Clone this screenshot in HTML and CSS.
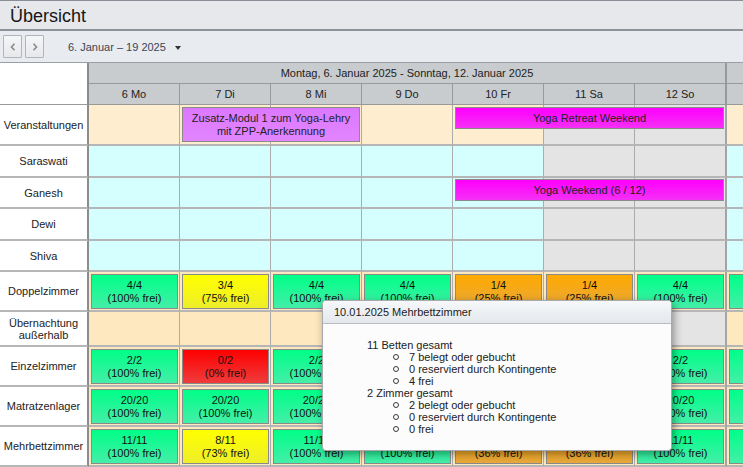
FILE: index.html
```html
<!DOCTYPE html>
<html lang="de">
<head>
<meta charset="utf-8">
<title>Übersicht</title>
<link rel="stylesheet" href="styles.css">
</head>
<body>
<div class="app">
  <header class="titlebar"><h1>Übersicht</h1></header>
  <div class="toolbar">
    <button class="nav" aria-label="zurück"><svg width="6" height="8" viewBox="0 0 6 8"><polyline points="4.5,0.8 1.5,4 4.5,7.2" fill="none" stroke="#8a8a8a" stroke-width="1.6"/></svg></button>
    <button class="nav" aria-label="weiter"><svg width="6" height="8" viewBox="0 0 6 8"><polyline points="1.5,0.8 4.5,4 1.5,7.2" fill="none" stroke="#8a8a8a" stroke-width="1.6"/></svg></button>
    <span class="range">6. Januar – 19 2025</span><span class="caret"></span>
  </div>

  <div class="sched">
    <div class="head">
      <div class="hlabel"></div>
      <div class="week">Montag, 6. Januar 2025 - Sonntag, 12. Januar 2025</div>
      <div class="week nextweek"></div>
      <div class="day">6 Mo</div>
      <div class="day">7 Di</div>
      <div class="day">8 Mi</div>
      <div class="day">9 Do</div>
      <div class="day">10 Fr</div>
      <div class="day">11 Sa</div>
      <div class="day end">12 So</div>
      <div class="day"></div>
    </div>

    <div class="row r-ev">
      <div class="cell lab">Veranstaltungen</div>
      <div class="cell ev"></div>
      <div class="cell ev"></div>
      <div class="cell ev"></div>
      <div class="cell ev"></div>
      <div class="cell ev"></div>
      <div class="cell we"></div>
      <div class="cell we end"></div>
      <div class="cell ev"></div>
      <div class="bar violet span-zusatz">Zusatz-Modul 1 zum Yoga-Lehry<br>mit ZPP-Anerkennung</div>
      <div class="bar magenta span-weekend">Yoga Retreat Weekend</div>
    </div>

    <div class="row r-p1">
      <div class="cell lab">Saraswati</div>
      <div class="cell cy"></div><div class="cell cy"></div><div class="cell cy"></div><div class="cell cy"></div><div class="cell cy"></div>
      <div class="cell we"></div><div class="cell we end"></div><div class="cell cy"></div>
    </div>
    <div class="row r-p2">
      <div class="cell lab">Ganesh</div>
      <div class="cell cy"></div><div class="cell cy"></div><div class="cell cy"></div><div class="cell cy"></div><div class="cell cy"></div>
      <div class="cell we"></div><div class="cell we end"></div><div class="cell cy"></div>
      <div class="bar magenta span-weekend slim">Yoga Weekend (6 / 12)</div>
    </div>
    <div class="row r-p1">
      <div class="cell lab">Dewi</div>
      <div class="cell cy"></div><div class="cell cy"></div><div class="cell cy"></div><div class="cell cy"></div><div class="cell cy"></div>
      <div class="cell we"></div><div class="cell we end"></div><div class="cell cy"></div>
    </div>
    <div class="row r-p2">
      <div class="cell lab">Shiva</div>
      <div class="cell cy"></div><div class="cell cy"></div><div class="cell cy"></div><div class="cell cy"></div><div class="cell cy"></div>
      <div class="cell we"></div><div class="cell we end"></div><div class="cell cy"></div>
    </div>

    <div class="row r-rm">
      <div class="cell lab">Doppelzimmer</div>
      <div class="cell rm"><div class="box green">4/4<br>(100% frei)</div></div>
      <div class="cell rm"><div class="box yellow">3/4<br>(75% frei)</div></div>
      <div class="cell rm"><div class="box green">4/4<br>(100% frei)</div></div>
      <div class="cell rm"><div class="box green">4/4<br>(100% frei)</div></div>
      <div class="cell rm"><div class="box orange">1/4<br>(25% frei)</div></div>
      <div class="cell rm"><div class="box orange">1/4<br>(25% frei)</div></div>
      <div class="cell rm end"><div class="box green">4/4<br>(100% frei)</div></div>
      <div class="cell rm"><div class="box green"></div></div>
    </div>

    <div class="row r-ub">
      <div class="cell lab">Übernachtung<br>außerhalb</div>
      <div class="cell rm"></div><div class="cell rm"></div><div class="cell rm"></div><div class="cell rm"></div><div class="cell rm"></div>
      <div class="cell we"></div><div class="cell we end"></div><div class="cell rm"></div>
    </div>

    <div class="row r-rm">
      <div class="cell lab">Einzelzimmer</div>
      <div class="cell rm"><div class="box green">2/2<br>(100% frei)</div></div>
      <div class="cell rm"><div class="box red">0/2<br>(0% frei)</div></div>
      <div class="cell rm"><div class="box green">2/2<br>(100% frei)</div></div>
      <div class="cell rm"><div class="box green">2/2<br>(100% frei)</div></div>
      <div class="cell rm"><div class="box green">2/2<br>(100% frei)</div></div>
      <div class="cell rm"><div class="box green">2/2<br>(100% frei)</div></div>
      <div class="cell rm end"><div class="box green">2/2<br>(100% frei)</div></div>
      <div class="cell rm"><div class="box green"></div></div>
    </div>

    <div class="row r-rm">
      <div class="cell lab">Matratzenlager</div>
      <div class="cell rm"><div class="box green">20/20<br>(100% frei)</div></div>
      <div class="cell rm"><div class="box green">20/20<br>(100% frei)</div></div>
      <div class="cell rm"><div class="box green">20/20<br>(100% frei)</div></div>
      <div class="cell rm"><div class="box green">20/20<br>(100% frei)</div></div>
      <div class="cell rm"><div class="box green">20/20<br>(100% frei)</div></div>
      <div class="cell rm"><div class="box green">20/20<br>(100% frei)</div></div>
      <div class="cell rm end"><div class="box green">20/20<br>(100% frei)</div></div>
      <div class="cell rm"><div class="box green"></div></div>
    </div>

    <div class="row r-rm">
      <div class="cell lab">Mehrbettzimmer</div>
      <div class="cell rm"><div class="box green">11/11<br>(100% frei)</div></div>
      <div class="cell rm"><div class="box yellow">8/11<br>(73% frei)</div></div>
      <div class="cell rm"><div class="box green">11/11<br>(100% frei)</div></div>
      <div class="cell rm"><div class="box green">11/11<br>(100% frei)</div></div>
      <div class="cell rm"><div class="box orange">4/11<br>(36% frei)</div></div>
      <div class="cell rm"><div class="box orange">4/11<br>(36% frei)</div></div>
      <div class="cell rm end"><div class="box green">11/11<br>(100% frei)</div></div>
      <div class="cell rm"><div class="box green"></div></div>
    </div>
  </div>

  <div class="tooltip">
    <div class="tt-head">10.01.2025 Mehrbettzimmer</div>
    <div class="tt-body">
      <div>11 Betten gesamt</div>
      <ul>
        <li>7 belegt oder gebucht</li>
        <li>0 reserviert durch Kontingente</li>
        <li>4 frei</li>
      </ul>
      <div>2 Zimmer gesamt</div>
      <ul>
        <li>2 belegt oder gebucht</li>
        <li>0 reserviert durch Kontingente</li>
        <li>0 frei</li>
      </ul>
    </div>
  </div>
</div>
</body>
</html>
```

FILE: styles.css
```css
* { box-sizing: border-box; }
html, body { margin: 0; padding: 0; }
body {
  font-family: "Liberation Sans", Arial, sans-serif;
  font-size: 11px;
  color: #222;
  background: #fff;
}
.app {
  position: relative;
  width: 743px;
  height: 467px;
  overflow: hidden;
}

/* title bar */
.titlebar {
  height: 31px;
  background: #e6e8ec;
  border-top: 1px solid #8a8f97;
  border-bottom: 2px solid #8d9299;
  display: flex;
  align-items: center;
  padding-left: 10px;
}
.titlebar h1 {
  margin: 0;
  font-size: 18px;
  font-weight: normal;
  color: #161616;
  line-height: 20px;
  position: relative;
  top: 1px;
}

/* toolbar */
.toolbar {
  height: 32px;
  background: #e8ebef;
  border-bottom: 1px solid #9c9fa3;
  display: flex;
  align-items: center;
  padding-left: 3px;
}
.nav {
  width: 19px;
  height: 23px;
  margin: 0 3px 0 0;
  padding: 0;
  border: 1px solid #b1b4b8;
  border-radius: 1px;
  background: linear-gradient(#f5f6f8, #e6e8eb);
  display: flex;
  align-items: center;
  justify-content: center;
}
.range {
  margin-left: 21px;
  color: #3b4557;
  font-size: 11px;
}
.caret {
  margin-left: 9px;
  width: 0;
  height: 0;
  border-left: 3px solid transparent;
  border-right: 3px solid transparent;
  border-top: 4px solid #333;
  position: relative;
  top: 1px;
}

/* schedule */
.sched { width: 818px; }
.head, .row {
  display: grid;
  grid-template-columns: 89px repeat(6, 91px) 92px 91px;
}
.head { grid-template-rows: 21px 21px; }
.hlabel {
  grid-row: 1 / span 2;
  grid-column: 1;
  background: #fff;
  border-right: 2px solid #8c8c8c;
  border-bottom: 1px solid #999;
}
.week {
  grid-row: 1;
  grid-column: 2 / span 7;
  background: #c8ccce;
  border-right: 2px solid #999;
  border-bottom: 1px solid #999;
  display: flex;
  align-items: center;
  justify-content: center;
  color: #222;
}
.week.nextweek { grid-column: 9; border-right: 1px solid #999; }
.day {
  grid-row: 2;
  background: #c8ccce;
  border-right: 1px solid #999;
  border-bottom: 1px solid #999;
  display: flex;
  align-items: center;
  justify-content: center;
  color: #222;
}
.day.end { border-right: 2px solid #999; }

.r-ev { height: 41px; }
.r-p1 { height: 32px; }
.r-p2 { height: 31px; }
.r-rm { height: 40px; }
.r-ub { height: 35px; }

.row > .cell { grid-row: 1; }
.row > .cell:nth-child(1) { grid-column: 1; }
.row > .cell:nth-child(2) { grid-column: 2; }
.row > .cell:nth-child(3) { grid-column: 3; }
.row > .cell:nth-child(4) { grid-column: 4; }
.row > .cell:nth-child(5) { grid-column: 5; }
.row > .cell:nth-child(6) { grid-column: 6; }
.row > .cell:nth-child(7) { grid-column: 7; }
.row > .cell:nth-child(8) { grid-column: 8; }
.row > .cell:nth-child(9) { grid-column: 9; }

.cell {
  border-right: 1px solid #acacac;
  border-bottom: 2px solid #b6b6b6;
  display: flex;
  align-items: center;
  justify-content: center;
  text-align: center;
}
.cell.end { border-right: 2px solid #a4a4a4; }
.lab {
  background: #fff;
  border-right: 2px solid #8c8c8c;
  line-height: 12px;
  color: #222;
}
.ev { background: #feeecf; }
.cy { background: #d5ffff; }
.we { background: #e4e4e4; }
.rm { background: #fde8bf; align-items: stretch; }

/* event bars */
.bar {
  grid-row: 1;
  z-index: 1;
  align-self: start;
  margin: 2px 3px 0 2px;
  border: 1px solid #8a8a8a;
  display: flex;
  align-items: center;
  justify-content: center;
  text-align: center;
  line-height: 13px;
  color: #222;
}
.span-zusatz { grid-column: 3 / span 2; height: 35px; margin-right: 2px; }
.span-weekend { grid-column: 6 / span 3; height: 22px; }
.bar.slim { margin-top: 1px; }
.violet { background: linear-gradient(#dc78ff, #e285ff); }
.magenta { background: linear-gradient(#ff00ff, #f530f5); }

/* availability boxes */
.box {
  flex: 1;
  margin: 2px 1px 1px 2px;
  border: 1px solid #8a8a8a;
  display: flex;
  align-items: center;
  justify-content: center;
  text-align: center;
  line-height: 13px;
  color: #111;
}
.green  { background: linear-gradient(#00ff88, #44eea8); }
.yellow { background: linear-gradient(#ffff00, #eeee2a); }
.red    { background: linear-gradient(#ff0000, #ee3c3c); }
.orange { background: linear-gradient(#ffaa00, #e8a83c); }

/* tooltip */
.tooltip {
  position: absolute;
  left: 322px;
  top: 300px;
  width: 350px;
  height: 151px;
  border: 1px solid #a7abb0;
  border-radius: 4px;
  background: #fcfcfc;
  box-shadow: 2px 3px 9px rgba(0, 0, 0, 0.38);
  z-index: 5;
}
.tt-head {
  height: 23px;
  line-height: 22px;
  padding-left: 11px;
  border-bottom: 1px solid #b8bcc1;
  border-radius: 3px 3px 0 0;
  background: linear-gradient(#f6f8fa, #e4e8ec);
  color: #222;
}
.tt-body {
  padding: 15px 0 0 44px;
  line-height: 12px;
  color: #222;
}
.tt-body ul {
  margin: 0;
  padding-left: 40px;
  list-style: none;
}
.tt-body li::before {
  content: "";
  display: inline-block;
  width: 4px;
  height: 4px;
  border: 1.5px solid #3a3a3a;
  border-radius: 50%;
  margin-left: -14px;
  margin-right: 10px;
  vertical-align: 1px;
}
```
